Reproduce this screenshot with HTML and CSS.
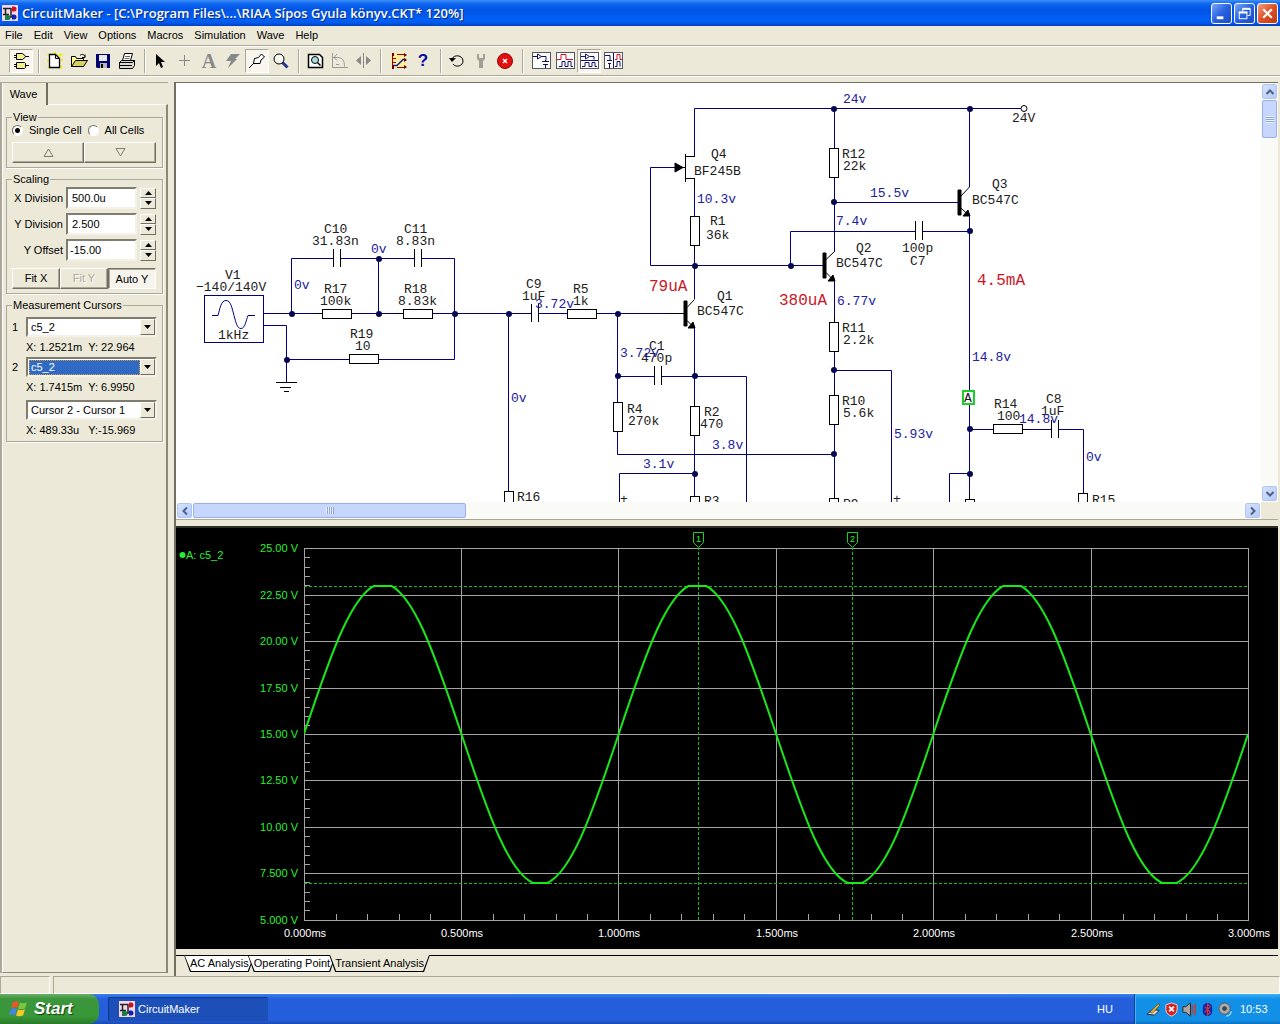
FILE: index.html
```html
<!DOCTYPE html>
<html lang="en">
<head>
<meta charset="utf-8">
<title>CircuitMaker</title>
<link rel="stylesheet" href="styles.css">
</head>
<body>
<svg class="defs" aria-hidden="true">
  <defs>
    <symbol id="app" viewBox="0 0 16 16">
      <rect width="16" height="16" fill="#f4d8ec"/>
      <path d="M1 3.500h8M3.500 3v7M1 9.500h6M9 3v9M5 12h5" stroke="#222" stroke-width="1.500" fill="none"/>
      <path d="M10 1.500h2a2.500 2.500 0 0 1 0 5h-2z" fill="#d01020"/>
      <path d="M3 10h3a2.500 2.500 0 0 1 0 5H3z" fill="#188048"/>
      <path d="M10 9.500h2a2.500 2.500 0 0 1 0 5h-2z" fill="#1020b0"/>
    </symbol>
    <symbol id="up" viewBox="0 0 7 4"><path d="M3.500 0L7 4H0z"/></symbol>
    <symbol id="down" viewBox="0 0 7 4"><path d="M3.500 4L7 0H0z"/></symbol>
    <symbol id="chevron" viewBox="0 0 10 10"><path d="M1.500 7L5 3.500 8.500 7" fill="none" stroke="#4d6185" stroke-width="2"/></symbol>
  </defs>
</svg>

<header class="titlebar">
  <svg class="app-icon"><use href="#app"/></svg>
  <h1>CircuitMaker - [C:\Program Files\...\RIAA Sípos Gyula könyv.CKT* 120%]</h1>
  <button class="win" aria-label="Minimize"><svg viewBox="0 0 20 20"><path d="M5 14.500h7" stroke="#fff" stroke-width="3"/></svg></button>
  <button class="win" aria-label="Restore"><svg viewBox="0 0 20 20" fill="none" stroke="#fff"><path d="M8 8V5h8v7h-3" /><path d="M8 5h8" stroke-width="2"/><rect x="4.500" y="8.500" width="8" height="7"/><path d="M4 9h9" stroke-width="2"/></svg></button>
  <button class="win close" aria-label="Close"><svg viewBox="0 0 20 20"><path d="M5.500 5.500l9 9M14.500 5.500l-9 9" stroke="#fff" stroke-width="2.300"/></svg></button>
</header>

<nav class="menu">
  <a href="#">File</a><a href="#">Edit</a><a href="#">View</a><a href="#">Options</a><a href="#">Macros</a><a href="#">Simulation</a><a href="#">Wave</a><a href="#">Help</a>
</nav>

<div class="toolbar">
  <button class="tool pressed" aria-label="Parts"><svg viewBox="0 0 22 22"><path d="M6.500 3.500h6l3 2.500v1l-3 2.500h-6zM6.500 12.500h8l1 1v4l-1 1h-8z" fill="#f4f090" stroke="#000"/><path d="M4 5.500h2M4 7.500h2M15 6.500h4M4 14.500h2M4 16.500h2M15 15.500h4" stroke="#000"/></svg></button>
  <span class="sep"></span>
  <button class="tool" aria-label="New"><svg viewBox="0 0 22 22"><path d="M4 4l2 2M11 2v2M16 4l-1 2M3 11h2M17 10h2M4 18l2-2M18 18l-2-2M16 6l2-2" stroke="#f0f000" stroke-width="2"/><path d="M5.500 4.500h6l4 4v9h-10z" fill="#fff" stroke="#000" stroke-width="1.300"/><path d="M11.500 4.500v4h4" fill="none" stroke="#000"/></svg></button>
  <button class="tool" aria-label="Open"><svg viewBox="0 0 22 22"><path d="M3.500 16.500V6.500h4l1 2h7v2" fill="#ffff90" stroke="#000"/><path d="M3.500 16.500l4-6h12l-4 6z" fill="#d8d060" stroke="#000"/><path d="M12 5.500c2-2 4-1 5 1m0-2v3h-3" fill="none" stroke="#000"/></svg></button>
  <button class="tool" aria-label="Save"><svg viewBox="0 0 22 22"><path d="M4 4h14v14H5l-1-1z" fill="#000070"/><path d="M7 5h8v6H7z" fill="#e8e8e8"/><path d="M8 13h7v5H8z" fill="#b8b8b8"/><path d="M9 14h2v4H9z" fill="#000"/></svg></button>
  <button class="tool" aria-label="Print"><svg viewBox="0 0 22 22" stroke="#000"><path d="M6.500 10.500l2-7h8l-2 7z" fill="#fff"/><path d="M9 6.500h5M8.500 8.500h5" stroke="#666"/><path d="M3.500 12.500l2-2h13v5l-2 3h-13z" fill="#dcdcd0"/><path d="M3.500 12.500h13l2-2M4 15.500h12" fill="none"/></svg></button>
  <span class="sep"></span>
  <button class="tool" aria-label="Select"><svg viewBox="0 0 22 22"><path d="M6 4v12l3-3 2 5 2-1-2-5h4z"/></svg></button>
  <button class="tool" aria-label="Wire"><svg viewBox="0 0 22 22"><path d="M10.500 5v11M5 10.500h11" stroke="#888"/></svg></button>
  <button class="tool letter" aria-label="Text">A</button>
  <button class="tool" aria-label="Delete"><svg viewBox="0 0 22 22"><path d="M9 4h9l-5 5h2l-9 9 3-7H4z" fill="#888"/></svg></button>
  <button class="tool pressed" aria-label="Probe"><svg viewBox="0 0 22 22"><path d="M3 18l5-5M7.500 13.500l1-5 4-1 3-3.500 3 3-3.500 3-1 3.500z" fill="#fff" stroke="#000"/></svg></button>
  <button class="tool" aria-label="Zoom"><svg viewBox="0 0 22 22"><path d="M12.500 12.500l5 5" stroke="#223098" stroke-width="3"/><circle cx="9" cy="9" r="5" fill="#f8f8f0" stroke="#000"/></svg></button>
  <span class="sep"></span>
  <button class="tool" aria-label="Fit"><svg viewBox="0 0 22 22"><path d="M4.500 4.500h11l3 3v10h-14z" fill="#fff" stroke="#000" stroke-width="1.500"/><circle cx="11" cy="10" r="3.500" fill="#a8dede" stroke="#000"/><path d="M13.500 12.500l3 3" stroke="#000" stroke-width="1.500"/></svg></button>
  <button class="tool" aria-label="Rotate"><svg viewBox="0 0 22 22"><path d="M4.500 3v14.500H20M4.500 7.500h5c5 0 7 3 7 9M9 4L6 7.500l3 3M8 14.500h3" fill="none" stroke="#999"/></svg></button>
  <button class="tool" aria-label="Mirror"><svg viewBox="0 0 22 22"><path d="M9 6v9L4 10.500zM14 6v9l5-4.500z" fill="#888"/><path d="M11.500 3v15" stroke="#888"/></svg></button>
  <span class="sep wide"></span>
  <button class="tool" aria-label="Digital options"><svg viewBox="0 0 22 22"><rect x="3" y="3" width="15" height="15" fill="#ffee9c"/><path d="M9 4.500h8M4.500 6v11M4 8.500h4M4 12.500h4M9 17.500h8" stroke="#900" fill="none"/><path d="M5 15.500h4l6-6h3" stroke="#1020a0" stroke-width="1.500" fill="none"/><path d="M16 3l3 2-3 2zM16 8l3 2-3 2zM16 15l3 2-3 2zM4 3h2v3H4zM4 16h2v3H4z" fill="#600"/></svg></button>
  <button class="tool help" aria-label="Help">?</button>
  <span class="sep"></span>
  <button class="tool" aria-label="Reset"><svg viewBox="0 0 22 22"><path d="M6 9c2-5 11-4 11 2 0 5-7 7-10 3" fill="none" stroke="#000"/><path d="M3 8h7l-4 4z"/></svg></button>
  <button class="tool" aria-label="Step"><svg viewBox="0 0 22 22"><path d="M7 4v5l2 2v7h4v-7l2-2V4h-2v4H9V4z" fill="#a0a098"/></svg></button>
  <button class="tool" aria-label="Stop"><svg viewBox="0 0 22 22"><circle cx="11" cy="11" r="7.500" fill="#e01010" stroke="#900"/><path d="M9 9l4 4M13 9l-4 4" stroke="#fff" stroke-width="1.500"/></svg></button>
  <span class="sep wide"></span>
  <button class="tool" aria-label="Schematic only"><svg viewBox="0 0 22 22"><rect x="2.500" y="2.500" width="18" height="16" fill="#fff" stroke="#556"/><path d="M3 6.500h4M11 6.500h5v4M12 11.500h7M13 14.500h5M15.500 11v-1M15.500 15v3" stroke="#101050" fill="none"/><path d="M7.500 4v5l4-2.500z" fill="none" stroke="#101050"/></svg></button>
  <button class="tool" aria-label="Waves only"><svg viewBox="0 0 22 22"><rect x="2.500" y="2.500" width="18" height="16" fill="#fff" stroke="#556"/><path d="M3 9.500h4v-5h5v5h7" stroke="#d01020" fill="none"/><path d="M5 16.500h3v-5h3v5h3v-5h3v5h2" stroke="#101070" fill="none"/></svg></button>
  <button class="tool pressed" aria-label="Split horizontal"><svg viewBox="0 0 22 22"><rect x="2.500" y="2.500" width="18" height="16" fill="#fff" stroke="#556"/><path d="M3 6.500h4M12 6.500h4v3M7.500 4v5l4-2.500zM3 10.500h17M4 16.500h3v-4h4v4h3v-4h3v4h2" stroke="#101070" fill="none"/></svg></button>
  <button class="tool" aria-label="Split vertical"><svg viewBox="0 0 22 22"><rect x="2.500" y="2.500" width="18" height="16" fill="#fff" stroke="#556"/><path d="M3 5.500h5v5M5 10.500h5M6 13.500h3M7.500 14v4M11.500 3v15" stroke="#101070" fill="none"/><path d="M13 9.500h2v-5h3v5h2" stroke="#d01020" fill="none"/><path d="M13 16.500h2v-5h3v5" stroke="#101070" fill="none"/></svg></button>
</div>

<main class="work">
  <aside class="side">
    <div class="side-tabs"><button class="side-tab">Wave</button></div>
    <div class="side-body">
      <fieldset class="group">
        <legend>View</legend>
        <div class="radios">
          <label><input type="radio" name="cell" checked>Single Cell</label>
          <label><input type="radio" name="cell">All Cells</label>
        </div>
        <div class="btn-row">
          <button class="btn" aria-label="Previous cell"><svg class="tri" viewBox="0 0 11 9"><path d="M5.500 1L10 8.500H1z"/></svg></button>
          <button class="btn" aria-label="Next cell"><svg class="tri" viewBox="0 0 11 9"><path d="M5.500 8L10 .5H1z"/></svg></button>
        </div>
      </fieldset>
      <fieldset class="group">
        <legend>Scaling</legend>
        <div class="fields">
          <label for="xd">X Division</label><input id="xd" value="500.0u" class="num inset-text"><span class="spin"><button aria-label="Increase X division"><svg><use href="#up"/></svg></button><button aria-label="Decrease X division"><svg><use href="#down"/></svg></button></span>
          <label for="yd">Y Division</label><input id="yd" value="2.500" class="num inset-text"><span class="spin"><button aria-label="Increase Y division"><svg><use href="#up"/></svg></button><button aria-label="Decrease Y division"><svg><use href="#down"/></svg></button></span>
          <label for="yo">Y Offset</label><input id="yo" value="-15.00" class="num"><span class="spin"><button aria-label="Increase Y offset"><svg><use href="#up"/></svg></button><button aria-label="Decrease Y offset"><svg><use href="#down"/></svg></button></span>
        </div>
        <div class="btn-row">
          <button class="btn">Fit X</button><button class="btn" disabled>Fit Y</button><button class="btn on">Auto Y</button>
        </div>
      </fieldset>
      <fieldset class="group">
        <legend>Measurement Cursors</legend>
        <div class="cursors">
          <label for="c1">1</label><span class="combo"><select id="c1"><option>c5_2</option></select><svg><use href="#down"/></svg></span>
          <output>X: 1.2521m&nbsp; Y: 22.964</output>
          <label for="c2">2</label><span class="combo selected"><select id="c2"><option>c5_2</option></select><svg><use href="#down"/></svg></span>
          <output>X: 1.7415m&nbsp; Y: 6.9950</output>
          <span class="combo diff"><select aria-label="Difference"><option>Cursor 2 - Cursor 1</option></select><svg><use href="#down"/></svg></span>
          <output>X: 489.33u&nbsp;&nbsp; Y:-15.969</output>
        </div>
      </fieldset>
    </div>
  </aside>

  <section class="docs">
    <div class="schematic">
      <div class="canvas">
        <svg class="drawing" width="1086" height="419" viewBox="176 83 1086 419">
          <g class="wire">
            <rect x="204.500" y="295.500" width="59" height="47"/>
            <path d="M212 315.500h6c2-7 3-15 8-15s6 8 8 15 3 13 7 13 5-8 7-13h7"/>
            <path d="M263 313.500h59M351 313.500h52M432 313.500h99M539 313.500h28M596 313.500h88"/>
            <path d="M263 325.500h23.500V382M286.500 359.500H349M378 359.500h76.500V258.500H422M291.500 313V258.500H333M341 258.500h73M378.500 258v55"/>
            <path d="M508.500 314V491M617.500 314v88M617.500 431v23.500H834M617.500 376.500H654M662 376.500h84.500V502M619.500 502V473.500H695"/>
            <path d="M694.500 299v-54M694.500 216v-38M694.500 156v-47.500H1021M675 167.500H650.500v98H824M790.500 265V231.500H915M923 231.500h47"/>
            <path d="M694.500 328v78M694.500 435v61M834.500 108v40M834.500 177v75M834.500 202.500H959M834.500 280v42M834.500 351v44M834.500 424v74M834.500 370.500h57V502"/>
            <path d="M969.500 108v79M969.500 216v174M969.500 404v95M970 429.500h23M1022 429.500h29M1059 429.500h24.500V493M970 473.500h-20.500V502"/>
          </g>
          <g class="part">
            <path d="M276 382.500h21M280 387.500h11M284 391.500h5"/>
            <path d="M315 313.500h7M396 313.500h7M668 313.500h17M694.500 178v10M834.500 492v6M834.500 316v6M834.500 389v6M969.500 493v6M694.500 400v6M694.500 245v6M1022 429.500h6"/>
            <path d="M333.500 249v18M340.500 249v18M414.500 249v18M421.500 249v18M531.500 304v18M538.500 304v18M654.500 366v19M661.500 366v19M915.500 221v19M922.500 221v19M1051.500 420v18M1058.500 420v18"/>
            <path d="M685.500 154v28M685 156.500h10M685 178.500h10M675 167.500h10M687 307.500l7.500-8M687 320.500l7.500 7.500M826 259.500l8.500-8M826 272.500l8 8M961 196l8.500-9M961 208l8.500 8"/>
            <path class="solid" d="M675 163v9l8-4.500zM695 328h-7l5-6zM835 281h-7l5-6zM970 216h-7l5-6z"/>
            <path class="solid" d="M684 301h3v25h-3zM823 253h3v25h-3zM958 190h3v25h-3z"/>
            <g class="body">
              <rect x="322.500" y="309.500" width="29" height="9"/><rect x="403.500" y="309.500" width="29" height="9"/><rect x="349.500" y="354.500" width="29" height="9"/>
              <rect x="567.500" y="309.500" width="29" height="9"/><rect x="613.500" y="402.500" width="9" height="29"/><rect x="690.500" y="406.500" width="9" height="29"/>
              <rect x="690.500" y="216.500" width="9" height="29"/><rect x="829.500" y="148.500" width="9" height="29"/><rect x="829.500" y="322.500" width="9" height="29"/>
              <rect x="829.500" y="395.500" width="9" height="29"/><rect x="993.500" y="424.500" width="29" height="9"/>
              <rect x="504.500" y="491.500" width="9" height="29"/><rect x="690.500" y="496.500" width="9" height="29"/><rect x="829.500" y="498.500" width="9" height="29"/>
              <rect x="965.500" y="499.500" width="9" height="29"/><rect x="1078.500" y="493.500" width="9" height="29"/><circle cx="1024" cy="108.500" r="3"/>
            </g>
          </g>
          <path class="dots" d="M292 314h0M379 314h0M455 314h0M509 314h0M287 360h0M379 259h0M618 314h0M618 376h0M695 376h0M695 474h0M695 266h0M791 266h0M834 109h0M834 202h0M834 370h0M834 454h0M970 109h0M970 231h0M970 429h0M970 474h0"/>
          <g class="name">
            <text x="324" y="233">C10</text><text x="312" y="245">31.83n</text><text x="404" y="233">C11</text><text x="396" y="245">8.83n</text>
            <text x="225" y="279">V1</text><text x="196" y="291">−140/140V</text><text x="218" y="339">1kHz</text>
            <text x="324" y="293">R17</text><text x="320" y="305">100k</text><text x="404" y="293">R18</text><text x="398" y="305">8.83k</text>
            <text x="350" y="338">R19</text><text x="355" y="350">10</text><text x="526" y="288">C9</text><text x="522" y="300">1uF</text>
            <text x="573" y="293">R5</text><text x="573" y="305">1k</text><text x="717" y="300">Q1</text><text x="697" y="315">BC547C</text>
            <text x="649" y="350">C1</text><text x="641" y="362">470p</text><text x="627" y="413">R4</text><text x="628" y="425">270k</text>
            <text x="704" y="416">R2</text><text x="700" y="428">470</text><text x="517" y="501">R16</text><text x="704" y="505">R3</text>
            <text x="711" y="158">Q4</text><text x="694" y="175">BF245B</text><text x="710" y="225">R1</text><text x="706" y="239">36k</text>
            <text x="842" y="158">R12</text><text x="843" y="170">22k</text><text x="856" y="252">Q2</text><text x="836" y="267">BC547C</text>
            <text x="842" y="332">R11</text><text x="843" y="344">2.2k</text><text x="842" y="405">R10</text><text x="843" y="417">5.6k</text><text x="843" y="508">R9</text>
            <text x="1012" y="122">24V</text><text x="992" y="188">Q3</text><text x="972" y="204">BC547C</text><text x="902" y="252">100p</text><text x="910" y="265">C7</text>
            <text x="994" y="408">R14</text><text x="997" y="420">100</text><text x="1046" y="403">C8</text><text x="1041" y="415">1uF</text><text x="1092" y="504">R15</text>
            <text x="620" y="503">+</text><text x="893" y="503">+</text>
          </g>
          <g class="volt">
            <text x="371" y="253">0v</text><text x="294" y="289">0v</text><text x="535" y="308">3.72v</text><text x="620" y="357">3.72v</text><text x="511" y="402">0v</text>
            <text x="712" y="449">3.8v</text><text x="643" y="468">3.1v</text><text x="843" y="103">24v</text><text x="697" y="203">10.3v</text><text x="870" y="197">15.5v</text>
            <text x="836" y="225">7.4v</text><text x="837" y="305">6.77v</text><text x="894" y="438">5.93v</text><text x="972" y="361">14.8v</text><text x="1019" y="423">14.8v</text><text x="1086" y="461">0v</text>
          </g>
          <g class="amp"><text x="649" y="291">79uA</text><text x="779" y="305">380uA</text><text x="977" y="285">4.5mA</text></g>
          <rect class="probe" x="963" y="391" width="11" height="13"/><text class="probe-name" x="964" y="402">A</text>
        </svg>
      </div>
      <div class="vbar"><button class="sb" aria-label="Scroll up"><svg><use href="#chevron"/></svg></button><span class="thumb v"></span><span class="track"></span><button class="sb flip" aria-label="Scroll down"><svg><use href="#chevron"/></svg></button></div>
      <div class="hbar"><button class="sb left" aria-label="Scroll left"><svg><use href="#chevron"/></svg></button><span class="thumb h"></span><span class="track"></span><button class="sb right" aria-label="Scroll right"><svg><use href="#chevron"/></svg></button></div>
    </div>
    <div class="plot">
      <svg class="scope" viewBox="176 528 1102 421">
        <defs>
          <clipPath id="rails"><rect x="304" y="585" width="944" height="299"/></clipPath>
          <path id="cycle" d="M304 734c25.700-77 50.200-150.500 78.700-150.500s53 73.500 78.700 150.500 50.200 150.500 78.700 150.500 53-73.500 78.600-150.500"/>
          <path id="yticks" d="M304 557.500h6M304 567.500h6M304 576.500h6M304 585.500h6"/>
          <path id="xticks" d="M336.500 914v6M367.500 914v6M399.500 914v6M430.500 914v6"/>
        </defs>
        <g class="grid">
          <path d="M304.500 548v372M461.500 548v372M618.500 548v372M776.500 548v372M933.500 548v372M1091.500 548v372M1248.500 548v372M304 548.500h945M304 595.500h945M304 641.500h945M304 688.500h945M304 734.500h945M304 780.500h945M304 827.500h945M304 873.500h945M304 920.500h945"/>
          <use href="#yticks"/><use href="#yticks" y="47"/><use href="#yticks" y="93"/><use href="#yticks" y="140"/><use href="#yticks" y="186"/><use href="#yticks" y="232"/><use href="#yticks" y="279"/><use href="#yticks" y="325"/>
          <use href="#xticks"/><use href="#xticks" x="157"/><use href="#xticks" x="314"/><use href="#xticks" x="472"/><use href="#xticks" x="629"/><use href="#xticks" x="787"/>
        </g>
        <path class="cursor" d="M304 586.500h944M304 883.500h944M698.500 547v373M852.500 547v373"/>
        <g class="wave">
          <g clip-path="url(#rails)"><use href="#cycle"/><use href="#cycle" x="314.700"/><use href="#cycle" x="629.300"/></g>
          <path d="M375 586h16M689 586h17M1004 586h17M531 883h18M846 883h18M1160 883h18"/>
        </g>
        <path class="flag" d="M693.500 532.500h10v10l-5 5-5-5zM847.500 532.500h10v10l-5 5-5-5z"/>
        <g class="green">
          <text x="696" y="542" class="mark">1</text><text x="850" y="542" class="mark">2</text>
          <circle cx="182.500" cy="555" r="3"/><text x="186" y="559">A: c5_2</text>
          <g class="end"><text x="298" y="552">25.00 V</text><text x="298" y="599">22.50 V</text><text x="298" y="645">20.00 V</text><text x="298" y="692">17.50 V</text><text x="298" y="738">15.00 V</text><text x="298" y="784">12.50 V</text><text x="298" y="831">10.00 V</text><text x="298" y="877">7.500 V</text><text x="298" y="924">5.000 V</text></g>
        </g>
        <g class="time"><text x="305" y="937">0.000ms</text><text x="462" y="937">0.500ms</text><text x="619" y="937">1.000ms</text><text x="777" y="937">1.500ms</text><text x="934" y="937">2.000ms</text><text x="1092" y="937">2.500ms</text><text x="1249" y="937">3.000ms</text></g>
      </svg>
    </div>
    <div class="tabs">
      <span class="rule lead"></span><button class="tab">AC Analysis</button><button class="tab">Operating Point</button><button class="tab active">Transient Analysis</button><span class="rule"></span>
    </div>
  </section>
</main>

<div class="status"><span class="cell first"></span><span class="cell"></span></div>

<footer class="taskbar">
  <button class="start"><svg viewBox="0 0 20 20"><path d="M4 3c2-1 4-1 6 0L8 9C6 8 4 8 2 9z" fill="#e8562a"/><path d="M11 3.500c2 1 4 1 7 0l-2 6c-3 1-5 1-7 0z" fill="#7cc63c"/><path d="M2 10c2-1 4-1 6 0l-2 6c-2-1-4-1-6 0z" fill="#4a84e8"/><path d="M9 10.500c2 1 4 1 7 0l-2 6c-3 1-5 1-7 0z" fill="#f8c828"/></svg>Start</button>
  <button class="task"><svg class="app-icon"><use href="#app"/></svg>CircuitMaker</button>
  <span class="lang">HU</span>
  <div class="tray">
    <svg viewBox="0 0 16 16"><path d="M1 13l6-5 7 1-5 5z" fill="#ddd" stroke="#222"/><path d="M4 11l9-9 2 1-8 9z" fill="#f0b020" stroke="#333" stroke-width=".6"/></svg>
    <svg viewBox="0 0 16 16"><path d="M8 1l6 2v5c0 4-3 6-6 7-3-1-6-3-6-7V3z" fill="#d82020" stroke="#f8d0d0"/><path d="M5.500 5l5 5M10.500 5l-5 5" stroke="#fff" stroke-width="2"/></svg>
    <svg viewBox="0 0 16 16"><path d="M1 5h3l5-4v14l-5-4H1z" fill="#b0a8a0" stroke="#222"/><path d="M11 3v10M14 2v12" stroke="#c04020" stroke-width="1.500"/></svg>
    <svg viewBox="0 0 16 16"><rect x="3" y="1" width="10" height="14" rx="5" fill="#0828b0"/><path d="M5 5l6 6-3 3V2l3 3-6 6" fill="none" stroke="#e03030" stroke-width="1.200"/></svg>
    <svg viewBox="0 0 16 16"><circle cx="7" cy="7" r="6" fill="#aaa" stroke="#555"/><circle cx="7" cy="7" r="2.500" fill="#345"/><path d="M9 15c3 0 5-2 5-5" stroke="#fff" fill="none"/></svg>
    <time>10:53</time>
  </div>
</footer>
</body>
</html>
```
FILE: styles.css
```css
* { box-sizing: border-box; }
body {
  margin: 0; min-height: 100vh; display: flex; flex-direction: column;
  background: #ece9d8; color: #000; font: 11px/13px "Liberation Sans", Arial, sans-serif;
}
button, input, select { font: inherit; color: inherit; margin: 0; padding: 0; border: 0; background: none; border-radius: 0; }
svg { display: block; flex: none; }
.defs { width: 0; height: 0; position: absolute; }
.app-icon { width: 16px; height: 16px; }

/* Title bar */
.titlebar {
  height: 26px; display: flex; align-items: center; gap: 2px; padding: 0 2px;
  background: linear-gradient(#3d8ff8, #0c64f0 4px, #0054e3 10px, #0060f8 20px, #0458e8 23px, #0040c0);
}
.titlebar h1 { flex: 1; margin: 0 0 0 2px; font: 600 13px/20px "Open Sans", sans-serif; color: #fff; text-shadow: 1px 1px #0a2a80; white-space: nowrap; overflow: hidden; }
.win { width: 21px; height: 21px; border: 1px solid #fff; border-radius: 3px; background: linear-gradient(135deg, #7ba6f8, #2860e0 50%, #1c4cc0); }
.win svg { width: 19px; height: 19px; }
.win.close { background: linear-gradient(135deg, #f0a080, #e05028 50%, #c03810); }

/* Menu and toolbar */
.menu { height: 20px; display: flex; align-items: center; padding: 0 5px; gap: 11px; border-bottom: 1px solid #aca899; }
.menu a { color: #000; text-decoration: none; }
.toolbar { height: 30px; display: flex; align-items: center; padding-left: 9px; border-top: 1px solid #fff; border-bottom: 1px solid #aca899; }
.tool { width: 24px; height: 24px; display: flex; align-items: center; justify-content: center; }
.tool svg { width: 22px; height: 22px; }
.tool.pressed { border: 1px solid; border-color: #aca899 #fff #fff #aca899; background: #f8f6ee; }
.letter { font: bold 20px/22px "Liberation Serif", serif; color: #888; }
.help { font: bold 17px/22px "Liberation Sans", sans-serif; color: #0a0aa0; }
.sep { width: 10px; height: 24px; background: linear-gradient(90deg, transparent 5px, #aca899 5px, #aca899 6px, #fff 6px, #fff 7px, transparent 7px); }
.sep.wide { width: 12px; }

/* Work area */
.work { flex: 1; display: flex; padding-top: 5px; border-top: 1px solid #fff; }
.side { width: 168px; flex: none; display: flex; flex-direction: column; border-left: 2px solid #aca899; border-top: 1px solid #aca899; margin-bottom: 3px; }
.side-tabs { display: flex; height: 21px; }
.side-tab { width: 46px; height: 22px; padding-right: 2px; border: solid; border-width: 0 2px 0 1px; border-color: #fff #716f64 #fff #fff; background: #ece9d8; position: relative; }
.side-body { flex: 1; border: solid; border-width: 1px 2px 1px 1px; border-color: #fff #8c897a #8c897a #fff; padding: 6px 3px; display: flex; flex-direction: column; gap: 5px; }
.group { margin: 0; padding: 0 6px 4px 5px; border: 1px solid #aca899; box-shadow: 1px 1px #fff; min-width: 0; }
.group:last-child { padding-bottom: 1px; }
.group legend { padding: 0 1px; line-height: 12px; }
.radios { display: flex; gap: 6px; height: 15px; margin-bottom: 4px; align-items: center; }
.radios label { display: flex; align-items: center; gap: 6px; white-space: nowrap; }
.radios input { appearance: none; width: 11px; height: 11px; border-radius: 50%; border: 1px solid; border-color: #716f64 #fff #fff #716f64; background: #fff; }
.radios input:checked { background: radial-gradient(circle, #000 2px, #fff 3px); }
.btn-row { display: flex; }
.btn { flex: 1; height: 21px; display: flex; align-items: center; justify-content: center; border: 1px solid; border-color: #fff #716f64 #716f64 #fff; box-shadow: inset -1px -1px #aca899; }
.btn:disabled { color: #aca899; text-shadow: 1px 1px #fff; }
.btn.on { border-color: #716f64 #fff #fff #716f64; box-shadow: inset 1px 1px #aca899; background: #f6f4ec; padding-top: 2px; }
.tri { width: 11px; height: 9px; fill: none; stroke: #807d70; }
.fields { display: grid; grid-template-columns: 51px 71px 16px; gap: 4px 3px; margin: 2px 0 7px; align-items: center; }
.fields label { text-align: right; white-space: nowrap; }
.num { height: 22px; min-width: 0; padding: 0 2px; background: #fff; border: 2px solid; border-color: #807d70 #f4f2e8 #f4f2e8 #807d70; }
.inset-text { padding-left: 4px; }
.spin { display: flex; flex-direction: column; height: 21px; }
.spin button { flex: 1; display: flex; align-items: center; justify-content: center; border: 1px solid; border-color: #fff #716f64 #716f64 #fff; }
.spin svg { width: 7px; height: 4px; }
.cursors { display: grid; grid-template-columns: 14px 131px; align-items: center; margin-top: 6px; }
.cursors output { grid-column: 2; height: 20px; line-height: 20px; white-space: pre; }
.combo { height: 20px; display: flex; align-items: center; background: #fff; border: 2px solid; border-color: #807d70 #f4f2e8 #f4f2e8 #807d70; }
.combo select { flex: 1; min-width: 0; height: 15px; appearance: none; padding-left: 2px; margin-left: 1px; }
.combo svg { width: 15px; height: 16px; padding: 5px 3px; background: #ece9d8; border: 1px solid; border-color: #fff #716f64 #716f64 #fff; }
.combo.selected select { background: #316ac5; color: #fff; outline: 1px dotted #d0a040; outline-offset: -1px; }
.combo.diff { grid-column: 2; margin-top: 3px; }

/* Documents */
.docs { flex: 1; min-width: 0; margin-left: 6px; margin-right: 2px; display: flex; flex-direction: column; border-left: 2px solid #716f64; border-top: 1px solid #716f64; }
.schematic { flex: 1; display: grid; grid-template-columns: minmax(0, 1fr) 17px; grid-template-rows: 1fr 17px; border-bottom: 1px solid #aca899; }
.canvas { min-height: 419px; overflow: hidden; background: #fff; }
.wire { fill: none; stroke: #000080; }
.part { fill: none; stroke: #000; }
.solid { fill: #000; }
.body { fill: #fff; }
.dots { stroke: #080850; stroke-width: 6; stroke-linecap: round; }
.drawing text { font: 13px "Liberation Mono", "Courier New", monospace; fill: #202020; }
.drawing .volt text { fill: #2020a0; }
.drawing .amp text { font-size: 16px; fill: #c81828; }
.probe { fill: #fff; stroke: #18d028; stroke-width: 2; }
.vbar, .hbar { display: flex; background: #fafaf6; }
.vbar { flex-direction: column; }
.sb { width: 17px; height: 17px; flex: none; display: flex; align-items: center; justify-content: center; border: 1px solid #fff; border-radius: 3px; background: linear-gradient(135deg, #d8e4ff, #b4c8f8); box-shadow: inset 0 0 0 1px #b0c4f0; }
.sb svg { width: 10px; height: 10px; }
.flip svg { transform: rotate(180deg); }
.left svg { transform: rotate(270deg); }
.right svg { transform: rotate(90deg); }
.track { flex: 1; }
.thumb { display: flex; align-items: center; justify-content: center; border: 1px solid #9ab0e8; border-radius: 2px; background: #c6d6fc; }
.thumb::after { content: ""; width: 8px; height: 7px; }
.thumb.v { height: 38px; margin: 0 1px; }
.thumb.h { width: 273px; margin: 1px 0; }
.thumb.v::after { background: repeating-linear-gradient(#eef4ff 0 1px, #8ca4d8 1px 2px); }
.thumb.h::after { background: repeating-linear-gradient(90deg, #eef4ff 0 1px, #8ca4d8 1px 2px); }
.plot { margin-top: 6px; background: #000; border-top: 2px solid #302f2a; }
.scope { width: 100%; height: auto; }
.grid { fill: none; stroke: #a4a4a4; }
.cursor { fill: none; stroke: #10c020; stroke-dasharray: 3 2; }
.wave { fill: none; stroke: #18e818; stroke-width: 2; }
.flag { fill: #000; stroke: #18d020; }
.green { fill: #28f030; }
.end { text-anchor: end; }
.time { fill: #fff; text-anchor: middle; }
.mark { font-size: 9px; }

/* Analysis tabs */
.tabs { display: flex; padding-top: 6px; height: 27px; align-items: flex-start; }
.rule { flex: 1; border-top: 1px solid #000; }
.rule.lead { flex: none; width: 8px; }
.tab { height: 17px; padding: 0 6px; margin-right: -7px; position: relative; isolation: isolate; background: #000; clip-path: polygon(0 0, 100% 0, calc(100% - 6px) 100%, 6px 100%); white-space: nowrap; }
.tab::before { content: ""; position: absolute; inset: 1px; z-index: -1; background: #fff; clip-path: polygon(0 0, 100% 0, calc(100% - 6px) 100%, 6px 100%); }
.tab.active { margin-right: 0; }
.tab.active::before { inset: 0 1px 1px; background: #ece9d8; }

/* Status and task bars */
.status { height: 18px; display: flex; gap: 3px; }
.cell { flex: 1; border: 1px solid; border-color: #aca899 #fff #fff #aca899; }
.cell.first { flex: none; width: 50px; }
.taskbar { height: 30px; display: flex; align-items: stretch; color: #fff; background: linear-gradient(#3a80f0, #245edb 5px, #245edb 26px, #1c48b0); }
.start { width: 99px; display: flex; align-items: center; gap: 5px; padding: 0 0 0 9px; border-radius: 0 10px 10px 0; font: italic bold 17px/24px "Liberation Sans", sans-serif; text-shadow: 1px 1px 1px #104010; background: linear-gradient(#68b068, #3c953c 5px, #389838 22px, #2a7a2a); }
.start svg { width: 20px; height: 20px; }
.task { width: 160px; margin: 3px 0 3px 9px; padding-left: 11px; display: flex; align-items: center; gap: 3px; border-radius: 2px; background: #1c50b8; box-shadow: inset 1px 1px 1px #103888; }
.lang { margin-left: auto; margin-right: 21px; align-self: center; }
.tray { width: 146px; display: flex; align-items: center; gap: 3px; padding-left: 11px; border-left: 1px solid #103c90; background: linear-gradient(#38b0f8, #1290e8 5px, #1290e8 26px, #0c70c0); box-shadow: inset 1px 0 #40b8f8; }
.tray svg { width: 15px; height: 15px; }
.tray time { margin-left: 4px; }
```
